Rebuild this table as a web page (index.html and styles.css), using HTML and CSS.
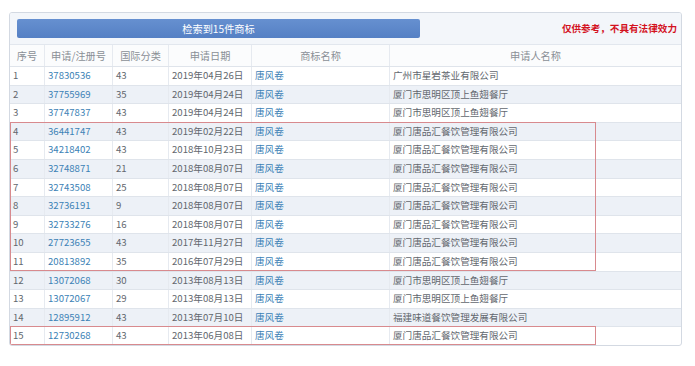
FILE: index.html
```html
<!DOCTYPE html>
<html lang="zh-CN">
<head>
<meta charset="utf-8">
<title>检索结果</title>
<link rel="stylesheet" href="styles.css">
</head>
<body>
<div class="panel">
  <div class="toolbar">
    <div class="count-bar">检索到15件商标</div>
    <div class="notice">仅供参考，不具有法律效力</div>
  </div>
  <div class="row head">
    <div class="c">序号</div><div class="c">申请/注册号</div><div class="c">国际分类</div><div class="c">申请日期</div><div class="c">商标名称</div><div class="c">申请人名称</div>
  </div>
  <div class="rows">
    <div class="row"><div>1</div><div class="link">37830536</div><div>43</div><div>2019年04月26日</div><div class="link">唐风卷</div><div>广州市星岩茶业有限公司</div></div>
    <div class="row alt"><div>2</div><div class="link">37755969</div><div>35</div><div>2019年04月24日</div><div class="link">唐风卷</div><div>厦门市思明区顶上鱼翅餐厅</div></div>
    <div class="row"><div>3</div><div class="link">37747837</div><div>43</div><div>2019年04月24日</div><div class="link">唐风卷</div><div>厦门市思明区顶上鱼翅餐厅</div></div>
    <div class="row alt"><div>4</div><div class="link">36441747</div><div>43</div><div>2019年02月22日</div><div class="link">唐风卷</div><div>厦门唐品汇餐饮管理有限公司</div></div>
    <div class="row"><div>5</div><div class="link">34218402</div><div>43</div><div>2018年10月23日</div><div class="link">唐风卷</div><div>厦门唐品汇餐饮管理有限公司</div></div>
    <div class="row alt"><div>6</div><div class="link">32748871</div><div>21</div><div>2018年08月07日</div><div class="link">唐风卷</div><div>厦门唐品汇餐饮管理有限公司</div></div>
    <div class="row"><div>7</div><div class="link">32743508</div><div>25</div><div>2018年08月07日</div><div class="link">唐风卷</div><div>厦门唐品汇餐饮管理有限公司</div></div>
    <div class="row alt"><div>8</div><div class="link">32736191</div><div>9</div><div>2018年08月07日</div><div class="link">唐风卷</div><div>厦门唐品汇餐饮管理有限公司</div></div>
    <div class="row"><div>9</div><div class="link">32733276</div><div>16</div><div>2018年08月07日</div><div class="link">唐风卷</div><div>厦门唐品汇餐饮管理有限公司</div></div>
    <div class="row alt"><div>10</div><div class="link">27723655</div><div>43</div><div>2017年11月27日</div><div class="link">唐风卷</div><div>厦门唐品汇餐饮管理有限公司</div></div>
    <div class="row"><div>11</div><div class="link">20813892</div><div>35</div><div>2016年07月29日</div><div class="link">唐风卷</div><div>厦门唐品汇餐饮管理有限公司</div></div>
    <div class="row alt"><div>12</div><div class="link">13072068</div><div>30</div><div>2013年08月13日</div><div class="link">唐风卷</div><div>厦门市思明区顶上鱼翅餐厅</div></div>
    <div class="row"><div>13</div><div class="link">13072067</div><div>29</div><div>2013年08月13日</div><div class="link">唐风卷</div><div>厦门市思明区顶上鱼翅餐厅</div></div>
    <div class="row alt"><div>14</div><div class="link">12895912</div><div>43</div><div>2013年07月10日</div><div class="link">唐风卷</div><div>福建味道餐饮管理发展有限公司</div></div>
    <div class="row"><div>15</div><div class="link">12730268</div><div>43</div><div>2013年06月08日</div><div class="link">唐风卷</div><div>厦门唐品汇餐饮管理有限公司</div></div>
    <div class="mark mark-a"></div>
    <div class="mark mark-b"></div>
  </div>
</div>
</body>
</html>
```

FILE: styles.css
```css
* { box-sizing: border-box; }
body {
  margin: 0;
  background: #ffffff;
  font-family: "Noto Sans CJK SC", "Noto Sans", sans-serif;
  font-size: 9.6px;
  color: #62676e;
}
.panel {
  margin: 12px 0 0 9px;
  width: 673px;
  border: 1px solid #d3d9e2;
  border-radius: 3px;
  overflow: hidden;
}
.toolbar {
  height: 32px;
  padding: 6px 4px 7px 7px;
  display: flex;
  align-items: center;
  justify-content: space-between;
  background: #f3f6fa;
  border-bottom: 1px solid #e2e7ee;
}
.count-bar {
  width: 403px;
  height: 19px;
  line-height: 19px;
  text-align: center;
  font-size: 10.2px;
  color: #ffffff;
  background: linear-gradient(#6690d0, #5580c4);
  border-radius: 2px;
}
.notice {
  color: #d3121e;
  font-weight: bold;
  font-size: 9.6px;
}
.row {
  display: grid;
  grid-template-columns: 34px 68px 56px 83px 138px 1fr;
  height: 18.6px;
  border-top: 1px solid #dfe4eb;
  line-height: 17.6px;
  white-space: nowrap;
}
.row > div {
  padding-left: 3px;
  border-left: 1px solid #e6eaf0;
  overflow: hidden;
}
.row > div:first-child { border-left: none; }
.row.head {
  height: 21px;
  line-height: 21px;
  border-top: none;
  font-size: 10.2px;
  color: #8a8f96;
  background: #fbfcfd;
}
.row.head > .c { text-align: center; padding-left: 0; }
.rows { position: relative; }
.rows > .row:first-child { border-top: 1px solid #dfe4eb; }
.alt { background: #edf1f7; }
.link { color: #3c82b6; }
.mark {
  position: absolute;
  left: 0;
  width: 586px;
  border: 1px solid #d88a8e;
  pointer-events: none;
}
.mark-a { top: 55.8px; height: 148.8px; }
.mark-b { top: 260.4px; height: 18.8px; }
```
